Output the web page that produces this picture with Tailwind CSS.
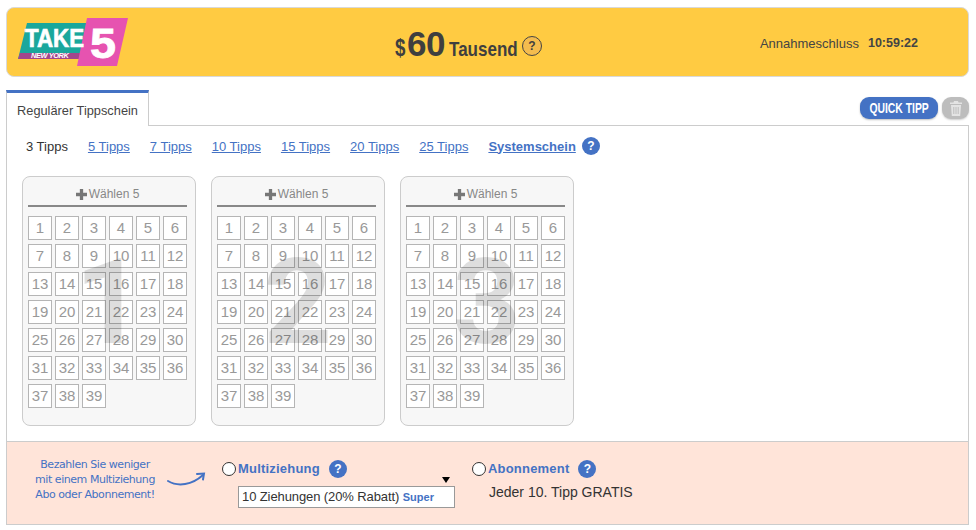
<!DOCTYPE html>
<html lang="de">
<head>
    <meta charset="UTF-8">
    <title>Take 5</title>
    <script src="https://cdn.jsdelivr.net/npm/@tailwindcss/browser@4"></script>
</head>
<body class="bg-white font-['Liberation_Sans',Arial,sans-serif] text-[#444]">
    <div class="w-[963px] ml-[6px] pt-[7px]">

        <!-- Banner -->
        <div class="relative flex items-center h-[70px] bg-[#ffcb42] border border-[#d9d9d9] rounded-lg">
            <svg class="ml-[11px] shrink-0" width="112" height="50" viewBox="0 0 112 50">
                <polygon points="9,6 72,6 62,42 0,42" fill="#1aa79c"/>
                <polygon points="2,36 66,36 61,42 0,42" fill="#a2468c"/>
                <polygon points="69,1 110,1 99,49 59,49" fill="#e653b0"/>
                <text x="7" y="30" font-family="Liberation Sans" font-weight="700" font-size="25" fill="#fff" stroke="#fff" stroke-width=".7" textLength="59" lengthAdjust="spacingAndGlyphs">TAKE</text>
                <text x="13" y="41" font-family="Liberation Sans" font-weight="700" font-style="italic" font-size="7.5" fill="#fff" textLength="38">NEW YORK</text>
                <text x="72" y="41" font-family="Liberation Sans" font-weight="700" font-size="43" fill="#fff" stroke="#fff" stroke-width=".8" textLength="26" lengthAdjust="spacingAndGlyphs">5</text>
            </svg>
            <div class="ml-[265px] flex items-baseline text-[#3f3f3f] mt-[7px]">
                <span class="inline-block w-[11px] origin-left scale-x-[.78] text-[24px] font-bold">$</span>
                <span class="text-[35px] font-bold leading-none ml-[1px] tracking-[-0.5px]">60</span>
                <span class="inline-block w-[69px] ml-[4px] origin-left scale-x-[.81] whitespace-nowrap text-[21px] font-bold">Tausend</span>
                <span class="ml-[4px] self-center w-[20px] h-[20px] rounded-full border border-[#444] bg-[#f4bc4e] flex items-center justify-center text-[12px] font-bold">?</span>
            </div>
            <div class="ml-auto mr-[50px] flex items-center mt-[3px]">
                <span class="text-[13px]">Annahmeschluss</span>
                <span class="ml-[9px] text-[12.500px] font-bold">10:59:22</span>
            </div>
        </div>

        <!-- Tab row -->
        <div class="flex justify-between h-[35px] mt-[13px]">
            <div class="w-[143px] h-[36px] relative z-10 bg-white border-x border-[#ccc] border-t-[3px] border-t-[#4472c4] text-[12.800px] flex items-center justify-center pt-[2px]">Regulärer Tippschein</div>
            <div class="flex gap-[4px] pt-[7px] h-[29px] box-content">
                <button class="w-[78px] h-[22px] bg-[#4472c4] rounded-[9px] text-white shadow-[0_1px_2px_rgba(0,0,0,.25)] flex items-center justify-center">
                    <span class="inline-block scale-x-[.74] whitespace-nowrap text-[14px] font-bold">QUICK TIPP</span>
                </button>
                <button class="w-[27px] h-[22px] bg-[#bdbdbd] rounded-[9px] flex items-center justify-center shadow-[0_1px_2px_rgba(0,0,0,.2)]">
                    <svg width="12" height="15" viewBox="0 0 12 15" fill="#e4e4e4">
                        <path d="M4 0h4l.5 1.5H12V3H0V1.5h3.5z"/>
                        <path d="M1 4h10l-.8 11H1.800zM3.300 6v7h1V6zM5.500 6v7h1V6zM7.700 6v7h1V6z" fill-rule="evenodd"/>
                    </svg>
                </button>
            </div>
        </div>

        <!-- Ticket panel -->
        <div class="h-[316px] border border-[#ccc] border-b-0">
            <div class="flex items-center gap-[20px] pl-[19px] pt-[11px] text-[13px] leading-[15px] text-[#4472c4]">
                <span class="text-[#333]">3 Tipps</span>
                <a class="underline" href="#">5 Tipps</a>
                <a class="underline" href="#">7 Tipps</a>
                <a class="underline" href="#">10 Tipps</a>
                <a class="underline" href="#">15 Tipps</a>
                <a class="underline" href="#">20 Tipps</a>
                <a class="underline" href="#">25 Tipps</a>
                <span class="flex items-center gap-[6px]">
                    <a class="underline font-bold" href="#">Systemschein</a>
                    <span class="w-[18px] h-[18px] rounded-full bg-[#4472c4] text-white text-[12px] font-bold flex items-center justify-center">?</span>
                </span>
            </div>
            <div id="tickets" class="flex gap-[15px] pl-[15px] pt-[21px]"></div>
        </div>

        <!-- Footer -->
        <div class="relative h-[84px] bg-[#ffe4d9] border border-[#ccc] flex">
            <div class="w-[150px] ml-[13px] mt-[15px] text-center text-[#4472c4] text-[11px] leading-[15px] font-['DejaVu_Sans',sans-serif] tracking-[-0.45px]">
                <div>Bezahlen Sie weniger</div>
                <div>mit einem Multiziehung</div>
                <div>Abo oder Abonnement!</div>
            </div>
            <svg class="mt-[30px] ml-[-3px]" width="40" height="16" viewBox="0 0 40 16" fill="none" stroke="#4472c4" stroke-width="2" stroke-linecap="round">
                <path d="M1 9c10 6 24 4 35-6"/>
                <path d="M30 2l7-.5-1 6"/>
            </svg>
            <div class="ml-[15px] mt-[17px] w-[250px]">
                <div class="flex items-center">
                    <input type="radio" class="appearance-none w-[14px] h-[14px] rounded-full border border-[#333] bg-white">
                    <span class="ml-[2px] text-[13px] tracking-[0.2px] font-bold text-[#4472c4]">Multiziehung</span>
                    <span class="ml-[9px] w-[18px] h-[18px] rounded-full bg-[#4472c4] text-white text-[12px] font-bold flex items-center justify-center">?</span>
                </div>
                <div class="relative ml-[16px] mt-[7px] w-[217px] h-[22px] bg-white border border-[#999] text-[13px] tracking-[-0.1px] leading-[20px] text-[#333] pl-[3px]">
                    10 Ziehungen (20% Rabatt) <span class="text-[11px] tracking-normal font-bold text-[#4472c4]">Super</span>
                    <span class="absolute right-[4px] top-[-10px] w-0 h-0 border-x-[4px] border-x-transparent border-t-[6px] border-t-black"></span>
                </div>
            </div>
            <div class="mt-[17px]">
                <div class="flex items-center">
                    <input type="radio" class="appearance-none w-[14px] h-[14px] rounded-full border border-[#333] bg-white">
                    <span class="ml-[2px] text-[13px] tracking-[0.2px] font-bold text-[#4472c4]">Abonnement</span>
                    <span class="ml-[9px] w-[18px] h-[18px] rounded-full bg-[#4472c4] text-white text-[12px] font-bold flex items-center justify-center">?</span>
                </div>
                <div class="ml-[17px] mt-[3px] text-[14px] leading-[20px] text-[#333]">Jeder 10. Tipp GRATIS</div>
            </div>
        </div>
    </div>

    <script>
        // build the three tickets, numbers 1-39
        const tickets = document.getElementById('tickets');
        [1, 2, 3].forEach((n) => {
            let cells = '';
            for (let i = 1; i <= 39; i++) {
                cells += `<div class="w-[24px] h-[24px] bg-white border border-[#b5b5b5] text-[15px] leading-[22px] text-center text-[#999]">${i}</div>`;
            }
            tickets.innerHTML += `
                <div class="relative w-[174px] h-[250px] bg-[#f7f7f7] border border-[#ccc] rounded-lg px-[5px]">
                    <div class="w-[159px] h-[30px] border-b-2 border-[#888] flex items-center justify-center text-[12px] text-[#888] pt-[6px]">
                        <svg class="mr-[2px]" width="11" height="11" viewBox="0 0 10 10" fill="#777"><path d="M3.500 0h3v3.500H10v3H6.500V10h-3V6.500H0v-3h3.500z"/></svg>
                        Wählen 5
                    </div>
                    <div class="grid grid-cols-[repeat(6,24px)] auto-rows-[24px] gap-x-[3px] gap-y-[4px] mt-[9px]">${cells}</div>
                    <div class="absolute inset-x-0 top-[66px] text-center font-['Roboto',sans-serif] text-[119px] leading-[119px] font-bold text-black/[.13] pointer-events-none">${n}</div>
                </div>`;
        });
    </script>
</body>
</html>
